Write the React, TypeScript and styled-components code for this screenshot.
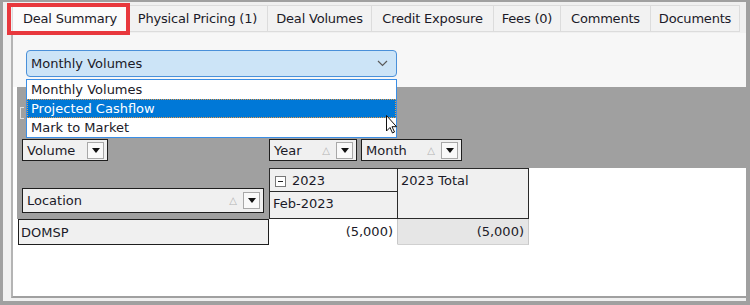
import styled, { createGlobalStyle } from 'styled-components';

const GlobalStyle = createGlobalStyle`
  html, body { margin: 0; padding: 0; background: #fff; }
  body { font-family: 'DejaVu Sans', Tahoma, sans-serif; color: #1b1a28; }
`;

const Frame = styled.div`
  position: relative;
  width: 750px;
  height: 305px;
  box-sizing: border-box;
  border: solid #a0a0a0;
  border-width: 2px 4px 4px 3px;
  background: #f0f0f0;
  display: flex;
  flex-direction: column;
  overflow: hidden;
`;

const TabStrip = styled.div`
  flex: none;
  display: flex;
  height: 31px;
  box-sizing: border-box;
  padding: 3px 0 0 9px;
`;

const Tab = styled.div<{ $w: number; $active?: boolean }>`
  width: ${p => p.$w}px;
  height: 27px;
  box-sizing: border-box;
  border: 1px solid #dcdcdc;
  margin-right: -1px;
  background: ${p => (p.$active ? '#fbfbfb' : '#f2f2f2')};
  display: flex;
  align-items: center;
  justify-content: center;
  font-size: 13px;
  white-space: nowrap;
  letter-spacing: -0.2px;
`;

const Highlight = styled.div`
  position: absolute;
  left: 4px;
  top: 1px;
  width: 123px;
  height: 32px;
  box-sizing: border-box;
  border: 4px solid #e8383d;
`;

const Panel = styled.div`
  flex: 1;
  margin: 0 0 3px 8px;
  border-left: 2px solid #b4b4b4;
  border-bottom: 2px solid #a0a0a0;
  background: #fff;
  display: flex;
  flex-direction: column;
`;

const Toolbar = styled.div`
  flex: none;
  height: 54px;
  box-sizing: border-box;
  padding: 17px 0 0 13px;
  background: #f7f7f7;
`;

const SelectWrap = styled.div`
  position: relative;
  width: 371px;
`;

const Select = styled.div`
  height: 27px;
  box-sizing: border-box;
  border: 1px solid #4a90d9;
  border-radius: 4px;
  background: #cce4f7;
  display: flex;
  align-items: center;
  justify-content: space-between;
  padding: 0 8px 0 4px;
  font-size: 13px;
`;

const List = styled.div`
  position: absolute;
  left: 0;
  top: 29px;
  width: 371px;
  box-sizing: border-box;
  border: 1px solid #3a8ee6;
  background: #fff;
  z-index: 2;
`;

const Option = styled.div<{ $selected?: boolean }>`
  height: 19px;
  box-sizing: border-box;
  padding-left: 3px;
  display: flex;
  align-items: center;
  font-size: 13px;
  background: ${p => (p.$selected ? '#0078d7' : '#fff')};
  color: ${p => (p.$selected ? '#fff' : 'inherit')};
  border: 1px dotted ${p => (p.$selected ? '#e59a4a' : 'transparent')};
`;

const Pivot = styled.div`
  margin-left: 4px;
  display: grid;
  grid-template-columns: 252px 129px 131px 1fr;
  grid-template-rows: 52px 29px 24px 27px 26px;
`;

const GrayArea = styled.div<{ $col: string; $row: string }>`
  grid-column: ${p => p.$col};
  grid-row: ${p => p.$row};
  background: #a0a0a0;
`;

/* the drop-zone caption sits under the open list; only its first stroke shows */
const FilterZone = styled(GrayArea)`
  display: flex;
  align-items: center;
  padding-left: 3px;
  &::before {
    content: '';
    width: 3px;
    height: 10px;
    border: 1px solid #e2e2e2;
    border-right: none;
  }
`;

const FieldRow = styled(GrayArea)<{ $pad: number }>`
  display: flex;
  align-items: flex-start;
  gap: 4px;
  padding-left: ${p => p.$pad}px;
`;

const LocationZone = styled(GrayArea)`
  display: flex;
  align-items: flex-end;
  padding: 0 0 6px 5px;
`;

const FieldButton = styled.div<{ $w: number; $h: number }>`
  width: ${p => p.$w}px;
  height: ${p => p.$h}px;
  box-sizing: border-box;
  border: 1px solid #1e1e1e;
  background: #f0f0f0;
  display: flex;
  align-items: center;
  padding: 0 3px 0 4px;
  font-size: 13px;
`;

const FieldLabel = styled.span`
  flex: 1;
`;

const SortMark = styled.span`
  color: #b5b5b5;
  font-size: 10px;
  margin-right: 6px;
`;

const DropButton = styled.div`
  width: 17px;
  height: 17px;
  box-sizing: border-box;
  border: 1px solid #a8a8a8;
  background: #f9f9f9;
  display: flex;
  align-items: center;
  justify-content: center;
  &::after {
    content: '';
    border-left: 4px solid transparent;
    border-right: 4px solid transparent;
    border-top: 5px solid #111;
  }
`;

const HeadCell = styled.div<{ $col: string; $row: string; $top?: boolean; $left?: boolean }>`
  grid-column: ${p => p.$col};
  grid-row: ${p => p.$row};
  background: #f0f0f0;
  border-right: 1px solid #2a2a2a;
  border-bottom: 1px solid #2a2a2a;
  border-top: ${p => (p.$top ? '1px solid #2a2a2a' : 'none')};
  border-left: ${p => (p.$left ? '1px solid #2a2a2a' : 'none')};
  display: flex;
  align-items: flex-start;
  gap: 6px;
  padding: 4px 0 0 3px;
  font-size: 13px;
`;

const Collapse = styled.span`
  width: 11px;
  height: 11px;
  box-sizing: border-box;
  border: 1px solid #777;
  background: #fff;
  margin-top: 3px;
  margin-left: 2px;
  display: flex;
  align-items: center;
  justify-content: center;
  &::after {
    content: '';
    width: 5px;
    height: 1px;
    background: #222;
  }
`;

const RowHead = styled.div`
  grid-column: 1;
  grid-row: 5;
  margin-left: 1px;
  background: #f0f0f0;
  border: 1px solid #1e1e1e;
  display: flex;
  align-items: center;
  padding-left: 2px;
  font-size: 13px;
`;

const ValueCell = styled.div<{ $col: number; $total?: boolean }>`
  grid-column: ${p => p.$col};
  grid-row: 5;
  background: ${p => (p.$total ? '#e6e6e6' : '#fff')};
  border-bottom: 1px solid ${p => (p.$total ? '#d0d0d0' : '#fff')};
  border-right: 1px solid #c8c8c8;
  display: flex;
  align-items: center;
  justify-content: flex-end;
  padding-right: 4px;
  font-size: 13px;
`;

const Cursor = styled.svg`
  position: absolute;
  left: 380px;
  top: 111px;
  z-index: 3;
`;

const tabs: [string, number][] = [
  ['Deal Summary', 116],
  ['Physical Pricing (1)', 141],
  ['Deal Volumes', 105],
  ['Credit Exposure', 123],
  ['Fees (0)', 68],
  ['Comments', 91],
  ['Documents', 90],
];

const Field = ({ label, w, h, sort = true }: { label: string; w: number; h: number; sort?: boolean }) => (
  <FieldButton $w={w} $h={h}>
    <FieldLabel>{label}</FieldLabel>
    {sort && <SortMark>△</SortMark>}
    <DropButton />
  </FieldButton>
);

export default function App() {
  return (
    <>
      <GlobalStyle />
      <Frame>
        <TabStrip>
          {tabs.map(([t, w], i) => (
            <Tab key={t} $w={w} $active={i === 0}>
              {t}
            </Tab>
          ))}
        </TabStrip>
        <Highlight />
        <Panel>
          <Toolbar>
            <SelectWrap>
              <Select>
                <span>Monthly Volumes</span>
                <svg width="11" height="7" viewBox="0 0 11 7">
                  <path d="M1 1 L5.5 5.5 L10 1" fill="none" stroke="#5a5a5a" strokeWidth="1.2" />
                </svg>
              </Select>
              <List>
                <Option>Monthly Volumes</Option>
                <Option $selected>Projected Cashflow</Option>
                <Option>Mark to Market</Option>
              </List>
            </SelectWrap>
          </Toolbar>
          <Pivot>
            <FilterZone $col="1 / -1" $row="1" />
            <FieldRow $col="1" $row="2" $pad={5}>
              <Field label="Volume" w={86} h={22} sort={false} />
            </FieldRow>
            <FieldRow $col="2 / -1" $row="2" $pad={0}>
              <Field label="Year" w={88} h={22} />
              <Field label="Month" w={101} h={22} />
            </FieldRow>
            <LocationZone $col="1" $row="3 / 5">
              <Field label="Location" w={242} h={25} />
            </LocationZone>
            <HeadCell $col="2" $row="3" $top $left>
              <Collapse />
              2023
            </HeadCell>
            <HeadCell $col="2" $row="4" $left>
              Feb-2023
            </HeadCell>
            <HeadCell $col="3" $row="3 / 5" $top>
              2023 Total
            </HeadCell>
            <RowHead>DOMSP</RowHead>
            <ValueCell $col={2}>(5,000)</ValueCell>
            <ValueCell $col={3} $total>
              (5,000)
            </ValueCell>
          </Pivot>
        </Panel>
        <Cursor width="14" height="22" viewBox="0 0 14 22">
          <path
            d="M3.5 2.5 L3.5 18 L7 14.5 L9.5 20 L11.5 19 L9 13.7 L13.5 13.7 Z"
            fill="#fff"
            stroke="#111"
            strokeWidth="1"
            strokeLinejoin="round"
          />
        </Cursor>
      </Frame>
    </>
  );
}
